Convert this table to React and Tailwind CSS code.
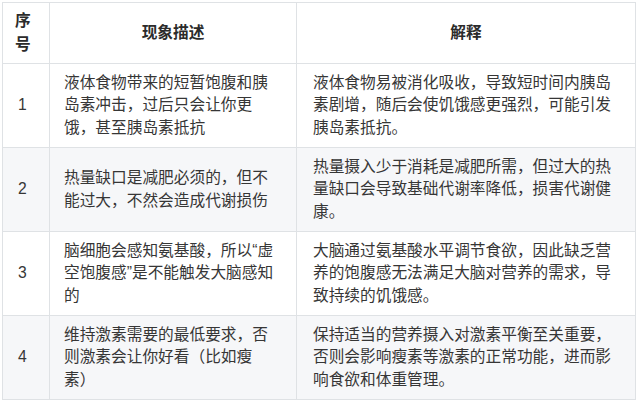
const ROWS = [
  {
    n: "1",
    desc: "液体食物带来的短暂饱腹和胰岛素冲击，过后只会让你更饿，甚至胰岛素抵抗",
    exp: "液体食物易被消化吸收，导致短时间内胰岛素剧增，随后会使饥饿感更强烈，可能引发胰岛素抵抗。",
  },
  {
    n: "2",
    desc: "热量缺口是减肥必须的，但不能过大，不然会造成代谢损伤",
    exp: "热量摄入少于消耗是减肥所需，但过大的热量缺口会导致基础代谢率降低，损害代谢健康。",
  },
  {
    n: "3",
    desc: "脑细胞会感知氨基酸，所以“虚空饱腹感”是不能触发大脑感知的",
    exp: "大脑通过氨基酸水平调节食欲，因此缺乏营养的饱腹感无法满足大脑对营养的需求，导致持续的饥饿感。",
  },
  {
    n: "4",
    desc: "维持激素需要的最低要求，否则激素会让你好看（比如瘦素）",
    exp: "保持适当的营养摄入对激素平衡至关重要，否则会影响瘦素等激素的正常功能，进而影响食欲和体重管理。",
  },
];

export default function App() {
  return (
    <div
      className="w-[640px] h-[403px] bg-white pt-[2px] pl-[2px] overflow-hidden text-[#363636] text-[15.7px] leading-[22.5px] [text-spacing-trim:space-all]"
      style={{ fontFamily: '"Liberation Sans", "Noto Sans CJK SC", sans-serif' }}
    >
      <table className="table-fixed border-collapse w-[633px]">
        <colgroup>
          <col className="w-[47px]" />
          <col className="w-[247px]" />
          <col className="w-[339px]" />
        </colgroup>
        <thead>
          <tr className="h-[61px] bg-white">
            <th className="border border-[#dfe2e5] pl-[12px] pr-[10px] text-left font-semibold text-[#2b2b2b] leading-[24px]">
              序号
            </th>
            <th className="border border-[#dfe2e5] px-[14px] text-center font-semibold text-[#2b2b2b]">
              现象描述
            </th>
            <th className="border border-[#dfe2e5] px-[16px] text-center font-semibold text-[#2b2b2b]">
              解释
            </th>
          </tr>
        </thead>
        <tbody>
          {ROWS.map((r, i) => (
            <tr key={r.n} className={`h-[84px] ${i % 2 ? "bg-[#f6f7f9]" : "bg-white"}`}>
              <td className="border border-[#dfe2e5] pl-[15px] pr-[6px] align-middle">{r.n}</td>
              <td className="border border-[#dfe2e5] pl-[14px] pr-[20px] align-middle">{r.desc}</td>
              <td className="border border-[#dfe2e5] pl-[16px] pr-[12px] align-middle">{r.exp}</td>
            </tr>
          ))}
        </tbody>
      </table>
    </div>
  );
}
